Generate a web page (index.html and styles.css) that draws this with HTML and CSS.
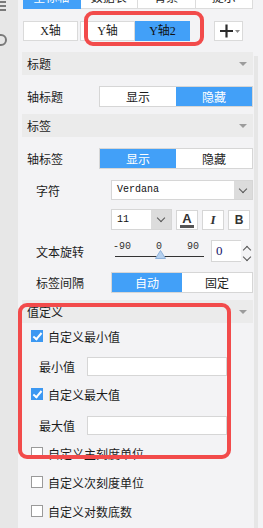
FILE: index.html
```html
<!DOCTYPE html>
<html lang="zh">
<head>
    <meta charset="UTF-8">
    <meta name="viewport" content="width=device-width, initial-scale=1.0">
    <title>坐标轴设置</title>
    <link rel="stylesheet" href="styles.css">
</head>
<body>
    <div class="app">
        <div class="sidebar">
            <svg class="side-icon" width="10" height="14" viewBox="0 0 10 14">
                <path d="M-4 2 H6 M-4 6 H6 M-4 10 H6" stroke="#7a7a7a" stroke-width="2" fill="none"/>
            </svg>
            <svg class="side-icon side-icon-round" width="10" height="14" viewBox="0 0 10 14">
                <circle cx="1" cy="7" r="5" stroke="#7a7a7a" stroke-width="2" fill="none"/>
            </svg>
        </div>

        <div class="main">
            <div class="tabs">
                <div class="tab active">全标轴</div>
                <div class="tab">数据表</div>
                <div class="tab">背景</div>
                <div class="tab">提示</div>
            </div>

            <div class="axis-bar">
                <div class="axis-btn">X轴</div>
                <div class="axis-btn axis-gap">Y轴</div>
                <div class="axis-btn active">Y轴2</div>
                <div class="add-btn">
                    <svg width="26" height="18" viewBox="0 0 26 18">
                        <path d="M4 9 H17 M10.5 2.5 V15.5" stroke="#2b2b2b" stroke-width="2.2" fill="none"/>
                        <path d="M19 8 H24 L21.5 11 Z" fill="#8a8a8a"/>
                    </svg>
                </div>
            </div>

            <div class="scroll">
                <div class="panel">
                    <div class="section-head">标题<span class="caret"></span></div>
                    <div class="row">
                        <div class="label">轴标题</div>
                        <div class="toggle wide">
                            <div class="opt">显示</div>
                            <div class="opt on">隐藏</div>
                        </div>
                    </div>

                    <div class="section-head">标签<span class="caret"></span></div>
                    <div class="row">
                        <div class="label">轴标签</div>
                        <div class="toggle wide">
                            <div class="opt on">显示</div>
                            <div class="opt">隐藏</div>
                        </div>
                    </div>
                    <div class="sub">
                        <div class="label">字符</div>
                        <div class="select font-select">
                            <span class="select-text">Verdana</span>
                            <span class="select-arrow"><i class="chev"></i></span>
                        </div>
                    </div>
                    <div class="sub style-row">
                        <div class="select size-select">
                            <span class="select-text">11</span>
                            <span class="select-arrow"><i class="chev"></i></span>
                        </div>
                        <div class="icon-btn color-btn">
                            <span class="color-a">A</span>
                            <span class="color-bar"></span>
                        </div>
                        <div class="icon-btn italic-btn">I</div>
                        <div class="icon-btn bold-btn">B</div>
                    </div>
                    <div class="sub rotate-row">
                        <div class="label">文本旋转</div>
                        <div class="slider">
                            <div class="ticks">
                                <span>-90</span>
                                <span>0</span>
                                <span>90</span>
                            </div>
                            <div class="track"></div>
                            <svg class="thumb" width="11" height="9" viewBox="0 0 11 9">
                                <path d="M5.5 0.5 L10.5 8.5 H0.5 Z" fill="#b4d0ef" stroke="#8fb2da"/>
                            </svg>
                        </div>
                        <div class="number">0</div>
                        <div class="spinner">
                            <i class="chev up"></i>
                            <i class="chev"></i>
                        </div>
                    </div>
                    <div class="sub">
                        <div class="label">标签间隔</div>
                        <div class="toggle">
                            <div class="opt on">自动</div>
                            <div class="opt">固定</div>
                        </div>
                    </div>

                    <div class="section-head value-head">值定义<span class="caret"></span></div>
                    <div class="opts">
                        <div class="check"><span class="box checked"></span>自定义最小值</div>
                        <div class="field">
                            <div class="field-label">最小值</div>
                            <div class="text-input"></div>
                        </div>
                        <div class="check"><span class="box checked"></span>自定义最大值</div>
                        <div class="field">
                            <div class="field-label">最大值</div>
                            <div class="text-input"></div>
                        </div>
                        <div class="check"><span class="box"></span>自定义主刻度单位</div>
                        <div class="check"><span class="box"></span>自定义次刻度单位</div>
                        <div class="check"><span class="box"></span>自定义对数底数</div>
                    </div>
                </div>
                <div class="scrollbar"></div>
            </div>
        </div>
    </div>

    <div class="mark mark-axis"></div>
    <div class="mark mark-value"></div>
</body>
</html>
```

FILE: styles.css
```css
body {
    margin: 0;
    padding: 0;
    width: 263px;
    height: 528px;
    overflow: hidden;
    background-color: #f3f3f5;
    font-family: "Noto Sans CJK SC", sans-serif;
    font-size: 12px;
    color: #1c1c1c;
    position: relative;
}
.app {
    display: flex;
    height: 528px;
}
.sidebar {
    flex: none;
    width: 18px;
    background-color: #e7e7e7;
    display: flex;
    flex-direction: column;
}
.side-icon-round {
    margin-top: 19px;
}
.main {
    flex: none;
    padding-left: 4px;
    width: 241px;
}

/* top tabs, cut off by the window */
.tabs {
    display: flex;
    width: 230px;
    height: 22px;
    margin: -13px 0 0 1px;
    background-color: #fff;
}
.tab {
    flex: 1;
    text-align: center;
    line-height: 20px;
    border-right: 1px solid #dcdcdc;
    border-bottom: 1px solid #dcdcdc;
}
.tab.active {
    background-color: #42a0f8;
    color: #fff;
    border-color: #42a0f8;
}

/* axis switch */
.axis-bar {
    display: flex;
    height: 20px;
    margin: 12px 0 0 1px;
}
.axis-btn {
    flex: none;
    width: 55px;
    box-sizing: border-box;
    background-color: #fff;
    border: 1px solid #dadada;
    text-align: center;
    line-height: 18px;
    font-family: "Liberation Serif", "Noto Sans CJK SC", serif;
}
.axis-gap {
    margin-left: 2px;
}
.axis-btn.active {
    background-color: #42a0f8;
    border-color: #42a0f8;
    color: #111;
}
.add-btn {
    flex: none;
    margin-left: 24px;
    width: 29px;
    height: 20px;
    box-sizing: border-box;
    background-color: #fff;
    border: 1px solid #dadada;
    display: flex;
    align-items: center;
    justify-content: center;
}

.scroll {
    display: flex;
    margin-top: 11px;
}
.panel {
    flex: none;
    width: 231px;
}
.scrollbar {
    flex: none;
    width: 4px;
    margin: 4px 0 0 1px;
    height: 480px;
    background-color: #e6e6e6;
}

.section-head {
    height: 23px;
    line-height: 23px;
    padding: 0 5px;
    background-color: #ebebeb;
    display: flex;
    justify-content: space-between;
    align-items: center;
}
.caret {
    width: 0;
    height: 0;
    border-left: 4px solid transparent;
    border-right: 4px solid transparent;
    border-top: 4px solid #9c9c9c;
    margin-right: 1px;
}

.row {
    display: flex;
    align-items: center;
    padding: 11px 0 7px 5px;
}
.row .label {
    flex: none;
    width: 72px;
}
.sub {
    display: flex;
    align-items: center;
    padding-left: 14px;
    margin-top: 10px;
}
.sub > * {
    flex: none;
}
.sub .label {
    width: 75px;
}
.row + .sub {
    margin-top: 4px;
}

.toggle {
    display: flex;
    width: 142px;
    height: 21px;
    box-sizing: border-box;
    border: 1px solid #d6d6d6;
    background-color: #fff;
}
.toggle.wide {
    width: 154px;
}
.opt {
    flex: 1;
    text-align: center;
    line-height: 19px;
}
.opt.on {
    background-color: #42a0f8;
    color: #fff;
}

.select {
    display: flex;
    height: 20px;
    box-sizing: border-box;
    border: 1px solid #d6d6d6;
    background-color: #fff;
}
.font-select {
    width: 142px;
}
.select-text {
    flex: 1;
    padding-left: 5px;
    line-height: 18px;
    font-family: "Liberation Mono", monospace;
    font-size: 10px;
    color: #111;
}
.select-arrow {
    width: 18px;
    background-color: #dcdcdc;
    display: flex;
    align-items: center;
    justify-content: center;
}
.chev {
    display: block;
    width: 5px;
    height: 5px;
    border-right: 1px solid #555;
    border-bottom: 1px solid #555;
    transform: rotate(45deg);
    margin-top: -3px;
}
.chev.up {
    transform: rotate(-135deg);
    margin-top: 3px;
}

.style-row {
    padding-left: 89px;
    margin-top: 9px;
}
.size-select {
    width: 61px;
    height: 21px;
}
.size-select .select-text {
    line-height: 19px;
}
.size-select .select-arrow {
    width: 20px;
}
.icon-btn {
    width: 22px;
    height: 20px;
    box-sizing: border-box;
    border: 1px solid #d6d6d6;
    background-color: #fff;
    margin-left: 4px;
    text-align: center;
    line-height: 18px;
}
.color-btn {
    display: flex;
    flex-direction: column;
    align-items: center;
}
.color-a {
    font-family: "Liberation Sans", sans-serif;
    font-weight: bold;
    font-size: 13px;
    line-height: 13px;
    margin-top: 1px;
    color: #333;
}
.color-bar {
    width: 14px;
    height: 3px;
    background-color: #555;
}
.italic-btn {
    font-family: "Liberation Serif", serif;
    font-style: italic;
    font-weight: bold;
    font-size: 13px;
    color: #333;
}
.bold-btn {
    font-family: "Liberation Sans", sans-serif;
    font-weight: bold;
    font-size: 12px;
    color: #333;
}

.rotate-row {
    height: 22px;
}
.slider {
    width: 94px;
    height: 22px;
    position: relative;
}
.ticks {
    display: flex;
    justify-content: space-between;
    width: 86px;
    font-family: "Liberation Mono", monospace;
    font-size: 10px;
    line-height: 10px;
    color: #333;
    padding: 2px 0 0 2px;
}
.track {
    margin: 4px 0 0 4px;
    width: 89px;
    height: 1px;
    background-color: #333;
}
.thumb {
    position: absolute;
    left: 44px;
    top: 10px;
}
.number {
    width: 30px;
    height: 22px;
    box-sizing: border-box;
    border: 1px solid #d6d6d6;
    border-right: none;
    background-color: #fff;
    margin-left: 6px;
    padding-left: 4px;
    line-height: 20px;
    font-family: "Liberation Serif", serif;
    font-size: 13px;
    color: #16166a;
}
.spinner {
    width: 12px;
    height: 22px;
    display: flex;
    flex-direction: column;
    align-items: center;
    justify-content: space-around;
    padding-top: 2px;
    box-sizing: border-box;
}

.value-head {
    margin-top: 7px;
}
.opts {
    padding: 3px 0 0 9px;
}
.check {
    display: flex;
    align-items: center;
    height: 20px;
}
.check + .check {
    margin-top: 9px;
}
.box {
    flex: none;
    width: 12px;
    height: 12px;
    box-sizing: border-box;
    border: 1px solid #9a9a9a;
    background-color: #fff;
    margin-right: 5px;
    position: relative;
}
.box.checked {
    background-color: #3c98f2;
    border-color: #3c98f2;
}
.box.checked::after {
    content: "";
    position: absolute;
    left: 3px;
    top: 0px;
    width: 3px;
    height: 7px;
    border-right: 2px solid #fff;
    border-bottom: 2px solid #fff;
    transform: rotate(40deg);
}
.field {
    display: flex;
    align-items: center;
    margin: 11px 0 8px 8px;
}
.field-label {
    flex: none;
    width: 48px;
}
.text-input {
    flex: none;
    width: 140px;
    height: 19px;
    box-sizing: border-box;
    border: 1px solid #d6d6d6;
    background-color: #fff;
}
.field + .check {
    margin-top: 0;
}
.field + .check + .field {
    margin-top: 12px;
}
.field + .check + .field + .check {
    margin-top: 1px;
}

/* red highlight frames drawn over the panel */
.mark {
    position: absolute;
    box-sizing: border-box;
    border: 4px solid #f24b4b;
    border-radius: 9px;
}
.mark-axis {
    left: 84px;
    top: 11px;
    width: 120px;
    height: 35px;
}
.mark-value {
    left: 18px;
    top: 303px;
    width: 213px;
    height: 156px;
}
```
